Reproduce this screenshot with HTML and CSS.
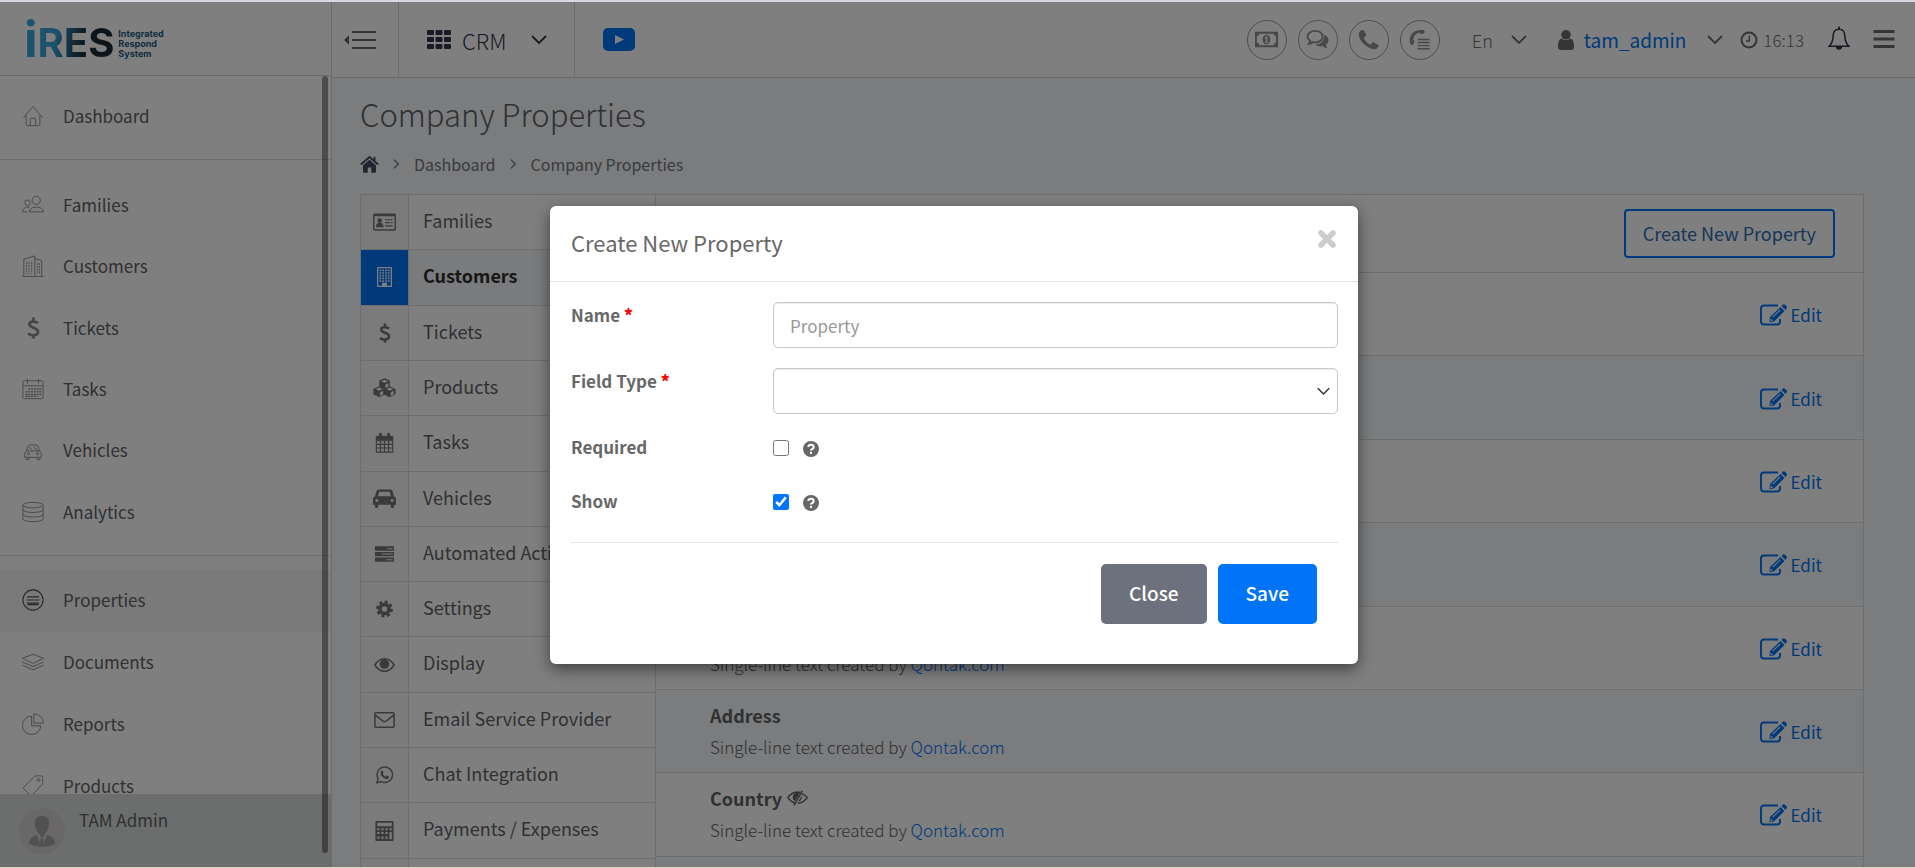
FILE: index.html
```html
<!DOCTYPE html>
<html lang="en">
<head>
<meta charset="utf-8">
<title>Company Properties</title>
<link rel="stylesheet" href="styles.css">
</head>
<body>
<svg class="defs" width="0" height="0" aria-hidden="true">
  <defs>
    <symbol id="i-home" viewBox="0 0 24 24"><path d="M1.500 14 12 1.500 22.500 14M4.500 11v10q0 1.500 1.500 1.500h12q1.500 0 1.500-1.500V11M9 22v-6q0-1.500 1.500-1.500h3Q15 14.500 15 16v6"/></symbol>
    <symbol id="i-users" viewBox="0 0 24 24"><circle cx="15.500" cy="7" r="4.500"/><path d="M8 19.500c0-7 15.500-7 15.500 0zM.8 19.500c0-4 3-5.500 7-5M.8 19.500H6"/><circle cx="6" cy="9.500" r="3"/></symbol>
    <symbol id="i-bldg" viewBox="0 0 24 24"><path d="M.5 23.500h23M2 23V4.500L14 1v22M14 4l7.500 2v17"/><path d="M5 8v13M7.500 8v13M10.500 8v13M17 9v12M19 9v12" stroke-dasharray="2 1"/></symbol>
    <symbol id="i-dollar" viewBox="0 0 24 24"><path d="M17.500 6.500C15 4.500 8 4 8 8s9.500 3.500 9.500 8-7 5-11 2M12.500.5v4.500M12.500 19v4.500" fill="none" stroke="currentColor" stroke-width="3"/></symbol>
    <symbol id="i-cal" viewBox="0 0 24 24"><path d="M1 4.500Q1 3 2.500 3h19Q23 3 23 4.500v17q0 1-1.500 1h-19Q1 22.500 1 21.500zM1 8.500h22M6 1v5M18 1v5"/><path d="M7 12h14M4 15h17M4 18h17M4 20h13" stroke-width="1.500" stroke-dasharray="2 1"/></symbol>
    <symbol id="i-car" viewBox="0 0 24 24"><path d="M5 13l1.500-5q.5-1.500 2-1.500h7q1.500 0 2 1.500l1.500 5M5 13q-2 1-2 3v4h18v-4q0-2-2-3zM4.500 20v2.500h3V20M16.500 20v2.500h3V20M8 9l3 2.500M13 9l4 3"/><circle cx="7" cy="16" r="1.200"/><circle cx="17" cy="16" r="1.200"/></symbol>
    <symbol id="i-db" viewBox="0 0 24 24"><ellipse cx="12" cy="4.500" rx="11" ry="3"/><path d="M1 4.500v15c0 4 22 4 22 0v-15M1 9.500c0 4 22 4 22 0M1 14.500c0 4 22 4 22 0"/></symbol>
    <symbol id="i-list" viewBox="0 0 24 24"><circle cx="12" cy="12" r="11" stroke-width="1.200"/><path d="M5.500 8.500h13M5 12h14M5.500 15.500h13M6 17h12" stroke-width="1.300"/></symbol>
    <symbol id="i-layers" viewBox="0 0 24 24"><path d="M12 3.500 23.500 8 12 13.500.5 8zM.5 12 12 17l11.500-5M.5 15.500 12 20.500l11.500-5"/></symbol>
    <symbol id="i-pie" viewBox="0 0 24 24"><path d="M10.500 3.500A10 10 0 1 0 20.500 14h-10zM13 1v10h10.500A10.500 10 0 0 0 13 1z"/></symbol>
    <symbol id="i-tag" viewBox="0 0 24 24"><path d="M2 13 13 2q1-1 2-1h6q1.500 0 1.500 1.500V9q0 1-1 2L11 22q-1 1-2 0l-7-7q-1-1 0-2z"/><circle cx="18" cy="5.500" r="1.500"/></symbol>

    <symbol id="f-card" viewBox="0 0 24 20"><path fill-rule="evenodd" d="M2 1h20q2 0 2 2v14q0 2-2 2H2q-2 0-2-2V3q0-2 2-2zM1.500 4v13q0 .6.600.6h19.800q.6 0 .6-.6V4z"/><circle cx="7" cy="8.500" r="2.400"/><path d="M3 15.500q0-5 4-5t4 5zM12.500 7h8v1.200h-8zM12.500 10h5v1.200h-5zM18.500 10h2v1.200h-2zM12.500 13.500h8v1.200h-8z"/></symbol>
    <symbol id="f-bldg" viewBox="0 0 20 24"><path fill-rule="evenodd" d="M2 0h16q1 0 1 1v22q0 1-1 1H2q-1 0-1-1V1q0-1 1-1zM2.500 1.500v21H7V19h6v3.500h4.500v-21z"/><path d="M5 3v15M8.300 3v15M11.700 3v15M15 3v15" stroke="currentColor" stroke-width="2" stroke-dasharray="2 1.200"/></symbol>
    <symbol id="f-cubes" viewBox="0 0 26 22"><path fill-rule="evenodd" d="M13 0l6 2.500v6.500l6.500 3V18L19 21.500 13 18.500 7 21.500.5 18v-6L7 9V2.500zM13 1.700 9 3.300l4 1.700 4-1.700zM14 7v4l3.500-1.700V5.400zM7 10.500l-4 1.700L7 14l4-1.800zM8 16v4l3.500-1.800v-4zM19 10.500l-4 1.700 4 1.800 4-1.800zM20 16v4l3.500-1.800v-4z"/></symbol>
    <symbol id="f-cal" viewBox="0 0 20 22"><path d="M1 4h18v17H1zM1 8.500h18M1 12.500h18M1 16.500h18M5.500 8.500V21M10 8.500V21M14.500 8.500V21" fill="none" stroke="currentColor" stroke-width="1.200"/><path d="M1 3h18v5H1zM4 0h3v5H4zM13 0h3v5h-3z"/></symbol>
    <symbol id="f-car" viewBox="0 0 24 20"><path fill-rule="evenodd" d="M6 0h12q2 0 2.500 2l1.300 5Q24 8 24 10v6h-2v1.500q0 2-1.800 2T18.500 17.500V16h-13v1.500q0 2-1.800 2T2 17.500V16H0v-6Q0 8 2.200 7l1.300-5Q4 0 6 0zM6.500 2.500 5.300 7h13.400l-1.200-4.500zM4 10a1.600 1.600 0 1 0 .01 0zM20 10a1.600 1.600 0 1 0 .01 0z"/></symbol>
    <symbol id="f-tasks" viewBox="0 0 24 20"><path fill-rule="evenodd" d="M2.700 2h18.600q.7 0 .7.700v3.100q0 .7-.7.700H2.700Q2 6.500 2 5.800V2.700Q2 2 2.700 2zM15 4v1h5.500V4zM2.700 7.800h18.600q.7 0 .7.700v3.100q0 .7-.7.700H2.700q-.7 0-.7-.7V8.500q0-.7.700-.7zM9 9.600v1h11.500v-1zM2.700 13.600h18.600q.7 0 .7.700v3.100q0 .7-.7.700H2.700q-.7 0-.7-.7v-3.100q0-.7.700-.7zM14 15.400v1h6.500v-1z"/></symbol>
    <symbol id="f-gear" viewBox="-1 -1 22 22"><circle cx="10" cy="10" r="5" fill="none" stroke="currentColor" stroke-width="4"/><circle cx="10" cy="10" r="7.800" fill="none" stroke="currentColor" stroke-width="3" stroke-dasharray="3.300 2.826"/></symbol>
    <symbol id="f-eye" viewBox="0 0 24 16"><path d="M2 8Q6 1.500 12 1.500T22 8q-4 6.500-10 6.500T2 8z" fill="none" stroke="currentColor" stroke-width="1.600"/><circle cx="12" cy="7" r="5"/></symbol>
    <symbol id="f-mail" viewBox="0 0 24 20"><path d="M3 2.500h18q1 0 1 1v13q0 1-1 1H3q-1 0-1-1v-13q0-1 1-1zM2.500 5 10 11q2 1.500 4 0l7.500-6" fill="none" stroke="currentColor" stroke-width="1.600"/></symbol>
    <symbol id="f-wa" viewBox="-1 -1 22 22"><path d="M1.500 18.500 3 14a8.500 8.500 0 1 1 3.300 3.200z" fill="none" stroke="currentColor" stroke-width="1.500"/><path d="M6.500 5.500q1-1 1.700 0l.8 1.800q.1.600-.9 1.500 1.300 2.200 3.300 3 .9-1.300 1.400-1.200l2 1q.4 2-1.600 2.700-2.600.5-5.400-2.200T5.700 7z"/></symbol>
    <symbol id="f-calc" viewBox="0 0 20 22"><path fill-rule="evenodd" d="M1 0h18q1 0 1 1v20q0 1-1 1H1q-1 0-1-1V1q0-1 1-1zM2 1.800v4h16v-4zM2 8v2.200h2.500V8zM6.500 8v2.200H9V8zM11 8v2.200h2.500V8zM15.500 8v2.200H18V8zM2 12.200v2.200h2.500v-2.200zM6.500 12.200v2.200H9v-2.200zM11 12.200v2.200h2.500v-2.200zM15.500 12.200v8H18v-8zM2 17v2.500h2.500V17zM6.500 17v2.500H9V17zM11 17v2.500h2.500V17z"/></symbol>
    <symbol id="f-edit" viewBox="0 0 27 22"><path d="M18 1.500H4Q1 1.500 1 4.500v13q0 3 3 3h13q3 0 3-3V15" fill="none" stroke="currentColor" stroke-width="1.900"/><path fill-rule="evenodd" d="M10 13 20.500 3l4 4L14 17.500l-4.500.5zM13 13.500l7.500-7.200-.7-.7-7.500 7.200zM21.500 2l1.500-1.500q1-.8 2 .2l1.500 1.500q1 1 0 2L25.500 6zM10.800 14.500l-.3 2.500 2.500-.3z"/></symbol>
    <symbol id="f-hidden" viewBox="0 0 24 18"><path d="M9.500 14.800Q4.500 13.500 1 8.500q4.500-6 11-6.300l3 .4M17 4q3.500 1.500 6 4.500-4 6-10.500 6.400" fill="none" stroke="currentColor" stroke-width="1.700"/><path d="M6.500 8.500q0-4.500 5-5.500l3 .3-5.300 9.200q-2.700-1-2.700-4zM17.500 5.500q0 6-5 8z"/><path d="M17.500.5 8 17.500" stroke="currentColor" stroke-width="1.800"/></symbol>
    <symbol id="f-home" viewBox="0 0 22 20"><path d="M11 5l7.500 6.500V19q0 1-1 1H13v-6H9v6H4.500q-1 0-1-1v-7.500z"/><path d="M1 10.500 11 2l10 8.500M16.800 1.500v5" fill="none" stroke="currentColor" stroke-width="2.200"/></symbol>
    <symbol id="f-money" viewBox="0 0 24 16"><path fill-rule="evenodd" d="M0 0h24v16H0zM4.500 2q0 2-2.500 2.500v7Q4.500 12 4.500 14h15q0-2 2.500-2.500v-7Q19.500 4 19.500 2z"/><path fill-rule="evenodd" d="M12 3c5.300 0 5.300 10 0 10S6.700 3 12 3zM10.300 6v1h1v3.300h-1v1h3.600v-1h-1V4.700h-1z"/></symbol>
    <symbol id="f-chat" viewBox="0 0 24 22"><path d="M9.500 2C14 2 17.500 4.600 17.500 8s-3.500 6-8 6q-1.500 0-2.500-.3-1.500 1.600-4 1.800 1.300-1.200 1.500-3Q1.500 10.500 1.500 8C1.500 4.600 5 2 9.500 2z" fill="none" stroke="currentColor" stroke-width="2"/><path d="M19.500 6q4 2.500 4 6 0 2.700-2.700 4.500.2 2.300 1.800 3.700-3 0-4.800-2.200-5 .8-8.300-1.600Q19 16 19.500 6z"/></symbol>
    <symbol id="f-phone" viewBox="0 0 22 22"><path d="M1 4.500Q2 1 5 1l1.200.3 2.500 5Q8.800 7.500 6 9.500q2.500 5 7 7 2-2.800 3.200-2.600l5 2.800q1 1.500-1 3.500-2.500 2-7 .3Q4 16.500 1.300 8.500.5 6.500 1 4.500z"/></symbol>
    <symbol id="f-calls" viewBox="0 0 24 24"><path d="M.8 11Q2 2.500 12 1l5 .2q1 1 .7 3.300-2 1.500-4.700 1l-.7-1.500Q5 6 4.700 12.500l1.500 1Q6.500 16.500 4.500 18l-2 .2Q.5 16 .8 11z"/><path d="M10 12h13.500M10 15.500h13.500M10 19h13.500M10 22.500h13.500" stroke="currentColor" stroke-width="1.600"/></symbol>
    <symbol id="f-user" viewBox="0 0 16 20"><circle cx="8" cy="4.800" r="4.800"/><path d="M3.200 8.500q4.800 3.500 9.600 0 3.200 1.500 3.200 8 0 3.500-3 3.500H3q-3 0-3-3.500 0-6.500 3.200-8z"/></symbol>
    <symbol id="f-clock" viewBox="0 0 18 18"><circle cx="9" cy="9" r="7.500" fill="none" stroke="currentColor" stroke-width="2"/><path d="M9.300 4.500V10H6" fill="none" stroke="currentColor" stroke-width="1.400"/></symbol>
    <symbol id="f-bell" viewBox="0 0 20 22"><path d="M1 18.500q3.500-3 3.700-10Q5 3 10 3t5.300 5.500q.2 7 3.700 10z" fill="none" stroke="currentColor" stroke-width="1.400"/><path d="M7 19.300h6q-.5 2.500-3 2.500t-3-2.500zM9.200.5h1.600V3H9.200z"/></symbol>
    <symbol id="f-down" viewBox="0 0 16 10"><path d="M1 1l7 7 7-7" fill="none" stroke="currentColor" stroke-width="1.800"/></symbol>
    <symbol id="f-right" viewBox="0 0 8 12"><path d="M1 1l5 5-5 5" fill="none" stroke="currentColor" stroke-width="1.600"/></symbol>
    <symbol id="f-help" viewBox="0 0 16 16"><circle cx="8" cy="8" r="8"/><path d="M5.300 6Q5.500 3.700 8 3.700T10.700 6q0 1.300-1.400 2T8 9.500M8 10.800V13" fill="none" stroke="#fff" stroke-width="2"/></symbol>
    <symbol id="f-x" viewBox="0 0 20 20"><path d="M4 4l12 12M16 4 4 16" stroke="currentColor" stroke-width="5.500" stroke-linecap="round"/></symbol>
    <symbol id="f-menu" viewBox="0 0 22 18"><path d="M.5 1.500h21M.5 9h21M.5 16.500h21" stroke="currentColor" stroke-width="3"/></symbol>
    <symbol id="f-collapse" viewBox="0 0 32 18"><path d="M5 4.500v9L0 9z" opacity=".8"/><path d="M8 1h24M8 9h24M8 17h24" stroke="currentColor" stroke-width="1.400"/></symbol>
    <symbol id="f-grid" viewBox="0 0 24 19"><path d="M1 0h5q1 0 1 1v3q0 1-1 1H1Q0 5 0 4V1q0-1 1-1zM9.500 0h5q1 0 1 1v3q0 1-1 1h-5q-1 0-1-1V1q0-1 1-1zM18 0h5q1 0 1 1v3q0 1-1 1h-5q-1 0-1-1V1q0-1 1-1zM1 7h5q1 0 1 1v3q0 1-1 1H1q-1 0-1-1V8q0-1 1-1zM9.500 7h5q1 0 1 1v3q0 1-1 1h-5q-1 0-1-1V8q0-1 1-1zM18 7h5q1 0 1 1v3q0 1-1 1h-5q-1 0-1-1V8q0-1 1-1zM1 14h5q1 0 1 1v3q0 1-1 1H1q-1 0-1-1v-3q0-1 1-1zM9.500 14h5q1 0 1 1v3q0 1-1 1h-5q-1 0-1-1v-3q0-1 1-1zM18 14h5q1 0 1 1v3q0 1-1 1h-5q-1 0-1-1v-3q0-1 1-1z"/></symbol>
    <symbol id="f-play" viewBox="0 0 32 23"><rect width="32" height="23" rx="5"/><path d="M12 7v9l9-4.500z" fill="#fff"/></symbol>
    <symbol id="f-person" viewBox="0 0 46 46"><circle cx="23" cy="23" r="23" fill="#d2cfcf"/><path d="M23 8c9 0 8 9 5 15l-3 4v2h-4v-2l-3-4c-3-6-4-15 5-15z" fill="#a2a2a2"/><path d="M18 27l3 8 1-5h2l1 5 3-8q8 2 8 9-6 3-13 3t-13-3q0-7 8-9z" fill="#a2a2a2"/></symbol>
  </defs>
</svg>

<div class="app">
  <aside class="sidebar">
    <a class="logo" href="#" aria-label="iRES Integrated Respond System">
      <span class="logo-mark"><span class="logo-i">i</span><span class="logo-res">RES</span></span>
      <span class="logo-name">Integrated<br>Respond<br>System</span>
    </a>
    <nav class="side-nav">
      <div class="side-group side-group-top">
        <a href="#"><svg><use href="#i-home"/></svg>Dashboard</a>
      </div>
      <div class="side-group side-group-main">
        <a href="#"><svg><use href="#i-users"/></svg>Families</a>
        <a href="#"><svg><use href="#i-bldg"/></svg>Customers</a>
        <a href="#"><svg><use href="#i-dollar"/></svg>Tickets</a>
        <a href="#"><svg><use href="#i-cal"/></svg>Tasks</a>
        <a href="#"><svg><use href="#i-car"/></svg>Vehicles</a>
        <a href="#"><svg><use href="#i-db"/></svg>Analytics</a>
      </div>
      <div class="side-group side-group-more">
        <a href="#" class="active"><svg><use href="#i-list"/></svg>Properties</a>
        <a href="#"><svg><use href="#i-layers"/></svg>Documents</a>
        <a href="#"><svg><use href="#i-pie"/></svg>Reports</a>
        <a href="#"><svg><use href="#i-tag"/></svg>Products</a>
      </div>
    </nav>
    <div class="user-box"><svg><use href="#f-person"/></svg><span>TAM Admin</span></div>
    <div class="side-scroll"></div>
  </aside>

  <div class="main">
    <header class="topbar">
      <button class="collapse" aria-label="Collapse menu"><svg><use href="#f-collapse"/></svg></button>
      <button class="switcher"><svg class="grid-icon"><use href="#f-grid"/></svg>CRM<svg class="down"><use href="#f-down"/></svg></button>
      <a class="video" href="#" aria-label="Video guides"><svg><use href="#f-play"/></svg></a>
      <div class="top-right">
        <div class="rounds">
          <button aria-label="Payments"><svg><use href="#f-money"/></svg></button>
          <button aria-label="Chats"><svg><use href="#f-chat"/></svg></button>
          <button aria-label="Call"><svg><use href="#f-phone"/></svg></button>
          <button aria-label="Call log"><svg><use href="#f-calls"/></svg></button>
        </div>
        <button class="lang">En<svg class="down"><use href="#f-down"/></svg></button>
        <button class="account"><svg class="user-icon"><use href="#f-user"/></svg><span>tam_admin</span><svg class="down"><use href="#f-down"/></svg></button>
        <span class="time"><svg><use href="#f-clock"/></svg>16:13</span>
        <button class="bell" aria-label="Notifications"><svg><use href="#f-bell"/></svg></button>
        <button class="burger" aria-label="Menu"><svg><use href="#f-menu"/></svg></button>
      </div>
    </header>

    <main class="content">
      <h1>Company Properties</h1>
      <nav class="crumbs" aria-label="Breadcrumb">
        <a href="#" aria-label="Home"><svg class="home"><use href="#f-home"/></svg></a>
        <svg class="sep"><use href="#f-right"/></svg>
        <a href="#">Dashboard</a>
        <svg class="sep"><use href="#f-right"/></svg>
        <span>Company Properties</span>
      </nav>

      <div class="panel">
        <ul class="menu">
          <li><a href="#"><span class="mi"><svg><use href="#f-card"/></svg></span>Families</a></li>
          <li class="active"><a href="#"><span class="mi"><svg><use href="#f-bldg"/></svg></span>Customers</a></li>
          <li><a href="#"><span class="mi"><svg><use href="#i-dollar"/></svg></span>Tickets</a></li>
          <li><a href="#"><span class="mi"><svg><use href="#f-cubes"/></svg></span>Products</a></li>
          <li><a href="#"><span class="mi"><svg><use href="#f-cal"/></svg></span>Tasks</a></li>
          <li><a href="#"><span class="mi"><svg><use href="#f-car"/></svg></span>Vehicles</a></li>
          <li><a href="#"><span class="mi"><svg><use href="#f-tasks"/></svg></span>Automated Actions</a></li>
          <li><a href="#"><span class="mi"><svg><use href="#f-gear"/></svg></span>Settings</a></li>
          <li><a href="#"><span class="mi"><svg><use href="#f-eye"/></svg></span>Display</a></li>
          <li><a href="#"><span class="mi"><svg><use href="#f-mail"/></svg></span>Email Service Provider</a></li>
          <li><a href="#"><span class="mi"><svg><use href="#f-wa"/></svg></span>Chat Integration</a></li>
          <li><a href="#"><span class="mi"><svg><use href="#f-calc"/></svg></span>Payments / Expenses</a></li>
          <li><a href="#"><span class="mi"></span></a></li>
        </ul>
        <section class="props">
          <div class="props-head"><button class="create">Create New Property</button></div>
          <ul class="prop-list">
            <li><div></div><a class="edit" href="#"><svg><use href="#f-edit"/></svg>Edit</a></li>
            <li><div></div><a class="edit" href="#"><svg><use href="#f-edit"/></svg>Edit</a></li>
            <li><div></div><a class="edit" href="#"><svg><use href="#f-edit"/></svg>Edit</a></li>
            <li><div></div><a class="edit" href="#"><svg><use href="#f-edit"/></svg>Edit</a></li>
            <li><div><h2>&nbsp;</h2><p>Single-line text created by <a href="#">Qontak.com</a></p></div><a class="edit" href="#"><svg><use href="#f-edit"/></svg>Edit</a></li>
            <li><div><h2>Address</h2><p>Single-line text created by <a href="#">Qontak.com</a></p></div><a class="edit" href="#"><svg><use href="#f-edit"/></svg>Edit</a></li>
            <li><div><h2>Country <svg><use href="#f-hidden"/></svg></h2><p>Single-line text created by <a href="#">Qontak.com</a></p></div><a class="edit" href="#"><svg><use href="#f-edit"/></svg>Edit</a></li>
            <li></li>
          </ul>
        </section>
      </div>
    </main>
  </div>

  <div class="backdrop">
    <form class="modal" role="dialog" aria-labelledby="modal-title">
      <div class="modal-head">
        <h2 id="modal-title">Create New Property</h2>
        <button type="button" class="x" aria-label="Dismiss"><svg><use href="#f-x"/></svg></button>
      </div>
      <div class="modal-body">
        <div class="field"><label for="name">Name <b>*</b></label><input id="name" type="text" placeholder="Property"></div>
        <div class="field"><label for="type">Field Type <b>*</b></label><span class="select"><select id="type"><option></option></select><svg><use href="#f-down"/></svg></span></div>
        <div class="field check"><label for="required">Required</label><span><input id="required" type="checkbox"><svg><use href="#f-help"/></svg></span></div>
        <div class="field check"><label for="show">Show</label><span><input id="show" type="checkbox" checked><svg><use href="#f-help"/></svg></span></div>
        <div class="modal-foot">
          <button type="button" class="close">Close</button>
          <button type="button" class="save">Save</button>
        </div>
      </div>
    </form>
  </div>
</div>
</body>
</html>
```
FILE: styles.css
```css
* { box-sizing: border-box; }

body {
  margin: 0;
  height: 100vh;
  border-top: 2px solid #d8d9e2;
  border-bottom: 1px solid #d9dabd;
  overflow: hidden;
  font: 17px/24px "Noto Sans CJK SC", "Noto Sans", sans-serif;
  color: #5f6265;
}

.defs { position: absolute; }
svg { display: block; flex: none; fill: currentColor; }
a { color: inherit; text-decoration: none; }
ul { list-style: none; margin: 0; padding: 0; }
h1, h2, p { margin: 0; }
button { font: inherit; color: inherit; background: none; border: 0; padding: 0; cursor: pointer; }

.app { position: relative; display: flex; height: 100%; }

/* Sidebar */
.sidebar {
  position: relative;
  width: 332px;
  flex: none;
  display: flex;
  flex-direction: column;
  background: #fff;
  border-right: 1px solid #d9d9d9;
}
.logo {
  display: flex;
  gap: 4px;
  height: 74px;
  flex: none;
  padding: 13px 0 0 24px;
  border-bottom: 1px solid #d4d4d4;
}
.logo-mark {
  display: flex;
  align-items: baseline;
  font: 700 40px/48px Inter, sans-serif;
  color: transparent;
  background: linear-gradient(100deg, #37a5dd 35%, #2a6c8e 48%, #1b2b36 66%);
  background-clip: text;
  -webkit-background-clip: text;
}
.logo-i { font-size: 50px; }
.logo-name { font: 700 9px/10px Inter, sans-serif; color: #24597f; padding-top: 14px; }

.side-nav { flex: 1; min-height: 0; overflow: hidden; }
.side-group { display: grid; grid-auto-rows: 1fr; border-bottom: 1px solid #dcdcdc; }
.side-group-top { height: 84px; padding: 10px 0 13px; }
.side-group-main { height: 396px; padding: 15px 0 12px; }
.side-group-more { height: 262px; padding-top: 14px; }
.side-group a { display: flex; align-items: center; gap: 19px; padding: 0 0 1px 22px; }
.side-group svg { width: 22px; height: 22px; fill: none; stroke: #8a8d8e; stroke-width: 1; color: #8a8d8e; }
.side-group .active { background: #f4f4f4; }
.side-group .active svg { stroke: #4c5054; }

.user-box {
  height: 73px;
  flex: none;
  display: flex;
  gap: 14px;
  padding: 14px 0 0 19px;
  background: #d9dcda;
}
.user-box svg { width: 46px; height: 46px; }
.side-scroll {
  position: absolute;
  top: 74px;
  right: 3px;
  bottom: 14px;
  width: 6px;
  border-radius: 3px;
  background: rgba(0, 0, 0, .4);
}

/* Top bar */
.main { flex: 1; min-width: 0; display: flex; flex-direction: column; background: #f6f8fb; }
.topbar {
  display: flex;
  height: 76px;
  flex: none;
  background: #fff;
  border-bottom: 1px solid #d4d4d4;
  color: #353548;
}
.collapse { display: flex; align-items: center; width: 67px; padding-left: 12px; border-right: 1px solid #dcdcdc; }
.collapse svg { width: 32px; height: 18px; }
.switcher {
  display: flex;
  align-items: center;
  width: 176px;
  padding-left: 28px;
  border-right: 1px solid #dcdcdc;
  font-size: 22px;
  font-weight: 300;
}
.grid-icon { width: 24px; height: 19px; margin-right: 11px; }
.down { width: 16px; height: 10px; }
.switcher .down { margin-left: 25px; }
.video { display: flex; align-items: center; padding-left: 28px; color: #0074f4; }
.video svg { width: 32px; height: 23px; }

.top-right { display: flex; align-items: center; margin-left: auto; padding-right: 20px; color: #6b6b6b; }
.rounds { display: flex; gap: 11px; margin-right: 32px; }
.rounds button {
  display: grid;
  place-items: center;
  width: 40px;
  height: 40px;
  border: 1px solid #9a9a9a;
  border-radius: 50%;
  color: #909090;
}
.rounds svg { width: 23px; height: 21px; }
.lang { display: flex; align-items: center; font-size: 18px; font-weight: 300; }
.lang .down { margin-left: 18px; }
.account { display: flex; align-items: center; margin-left: 31px; font-size: 19px; }
.account span { color: #0074f4; }
.user-icon { width: 16px; height: 20px; margin-right: 10px; }
.account .down { margin-left: 21px; }
.time { display: flex; align-items: center; margin-left: 17px; font-weight: 300; }
.time svg { width: 18px; height: 18px; margin-right: 5px; }
.bell { margin-left: 24px; padding-bottom: 4px; color: #353548; }
.bell svg { width: 22px; height: 24px; }
.burger { margin-left: 23px; padding-bottom: 2px; }
.burger svg { width: 22px; height: 18px; }

/* Content */
.content { flex: 1; min-height: 0; overflow: hidden; padding: 12px 51px 0 28px; }
h1 { font-size: 31px; line-height: 48px; font-weight: 300; }
.crumbs { display: flex; align-items: center; gap: 15px; height: 24px; margin-top: 14px; font-size: 16px; color: #74777a; }
.home { width: 19px; height: 18px; color: #444a5c; }
.sep { width: 7px; height: 12px; margin: 0 -1px; }

.panel { display: flex; margin-top: 18px; background: #fff; border: 1px solid #dadcdf; }
.menu { display: grid; grid-auto-rows: 1fr; width: 295px; height: 719px; flex: none; border-right: 1px solid #dcdcdc; font-size: 18px; line-height: 51px; }
.menu li { border-bottom: 1px solid #dcdcdc; }
.menu a { display: flex; height: 100%; gap: 14px; }
.mi { display: grid; place-items: center; width: 48px; background: #f6f6f6; border-right: 1px solid #dcdcdc; }
.mi svg { width: 23px; height: 20px; color: #747474; }
.menu .active { background: #f4f6fb; font-weight: 700; color: #2e2e2e; }
.menu .active .mi { background: #0074f4; }
.menu .active svg { color: #fff; }

.props { flex: 1; min-width: 0; }
.props-head {
  display: flex;
  align-items: center;
  justify-content: flex-end;
  height: 78px;
  padding-right: 28px;
  border-bottom: 1px solid #dcdcdc;
}
.create { height: 49px; padding: 0 17px 2px; border: 2px solid #0074f4; border-radius: 4px; color: #2f6cb3; font-size: 18px; }
.prop-list { display: grid; grid-auto-rows: 1fr; height: 667px; }
.prop-list li {
  display: flex;
  align-items: center;
  justify-content: space-between;
  padding: 0 41px 0 54px;
  border-bottom: 1px solid #dcdcdc;
}
.prop-list li:nth-child(even) { background: #f6f8fb; }
.prop-list h2 { display: flex; align-items: center; gap: 5px; font-size: 18px; line-height: 32px; font-weight: 700; }
.prop-list h2 svg { width: 21px; height: 16px; }
.prop-list p { line-height: 32px; font-weight: 300; }
.prop-list p a, .edit { color: #0074f4; }
.edit { display: flex; align-items: center; gap: 4px; padding-top: 2px; }
.edit svg { width: 27px; height: 22px; }

/* Modal */
.backdrop { position: absolute; inset: 0; background: rgba(0, 0, 0, .5); }
.modal {
  width: 808px;
  margin: 204px 0 0 550px;
  background: #fff;
  border-radius: 6px;
  box-shadow: 0 5px 15px rgba(0, 0, 0, .5);
  color: #676767;
}
.modal-head {
  display: flex;
  justify-content: space-between;
  align-items: flex-start;
  height: 76px;
  padding: 20px 21px 0;
  border-bottom: 1px solid #e2e2e2;
}
.modal-head h2 { font-size: 22px; line-height: 32px; font-weight: 400; }
.x { color: #ccc; padding-top: 3px; }
.x svg { width: 20px; height: 20px; }
.modal-body { padding: 20px 20px 40px 21px; }
.field { display: grid; grid-template-columns: 202px 1fr; margin-bottom: 20px; }
.field label { font-weight: 700; padding-top: 1px; }
.field b { color: #f00; }
.field input[type="text"], .field select {
  width: 100%;
  height: 46px;
  padding: 6px 16px;
  border: 1px solid #c8c8c8;
  border-radius: 5px;
  background: #fff;
  box-shadow: inset 0 1px 1px rgba(0, 0, 0, .08);
  font: inherit;
  color: #555;
}
.select { position: relative; display: block; }
.select select { display: block; appearance: none; }
.select svg { position: absolute; right: 8px; top: 19px; width: 13px; height: 9px; color: #333; pointer-events: none; }
.field input::placeholder { color: #999; }
.check { margin-bottom: 29px; }
.check span { display: flex; align-items: center; gap: 14px; padding-top: 2px; }
.check input { width: 16px; height: 16px; margin: 0; accent-color: #0075ff; }
.check svg { width: 16px; height: 16px; margin-top: 3px; }
.modal-foot { display: flex; justify-content: flex-end; gap: 11px; padding: 21px 21px 0; border-top: 1px solid #e2e2e2; }
.modal-foot button { height: 60px; padding: 0 28px 2px; border-radius: 5px; color: #fff; font-size: 19px; font-weight: 500; }
.close { background: #6c717d; }
.save { background: #0074f8; }
```
